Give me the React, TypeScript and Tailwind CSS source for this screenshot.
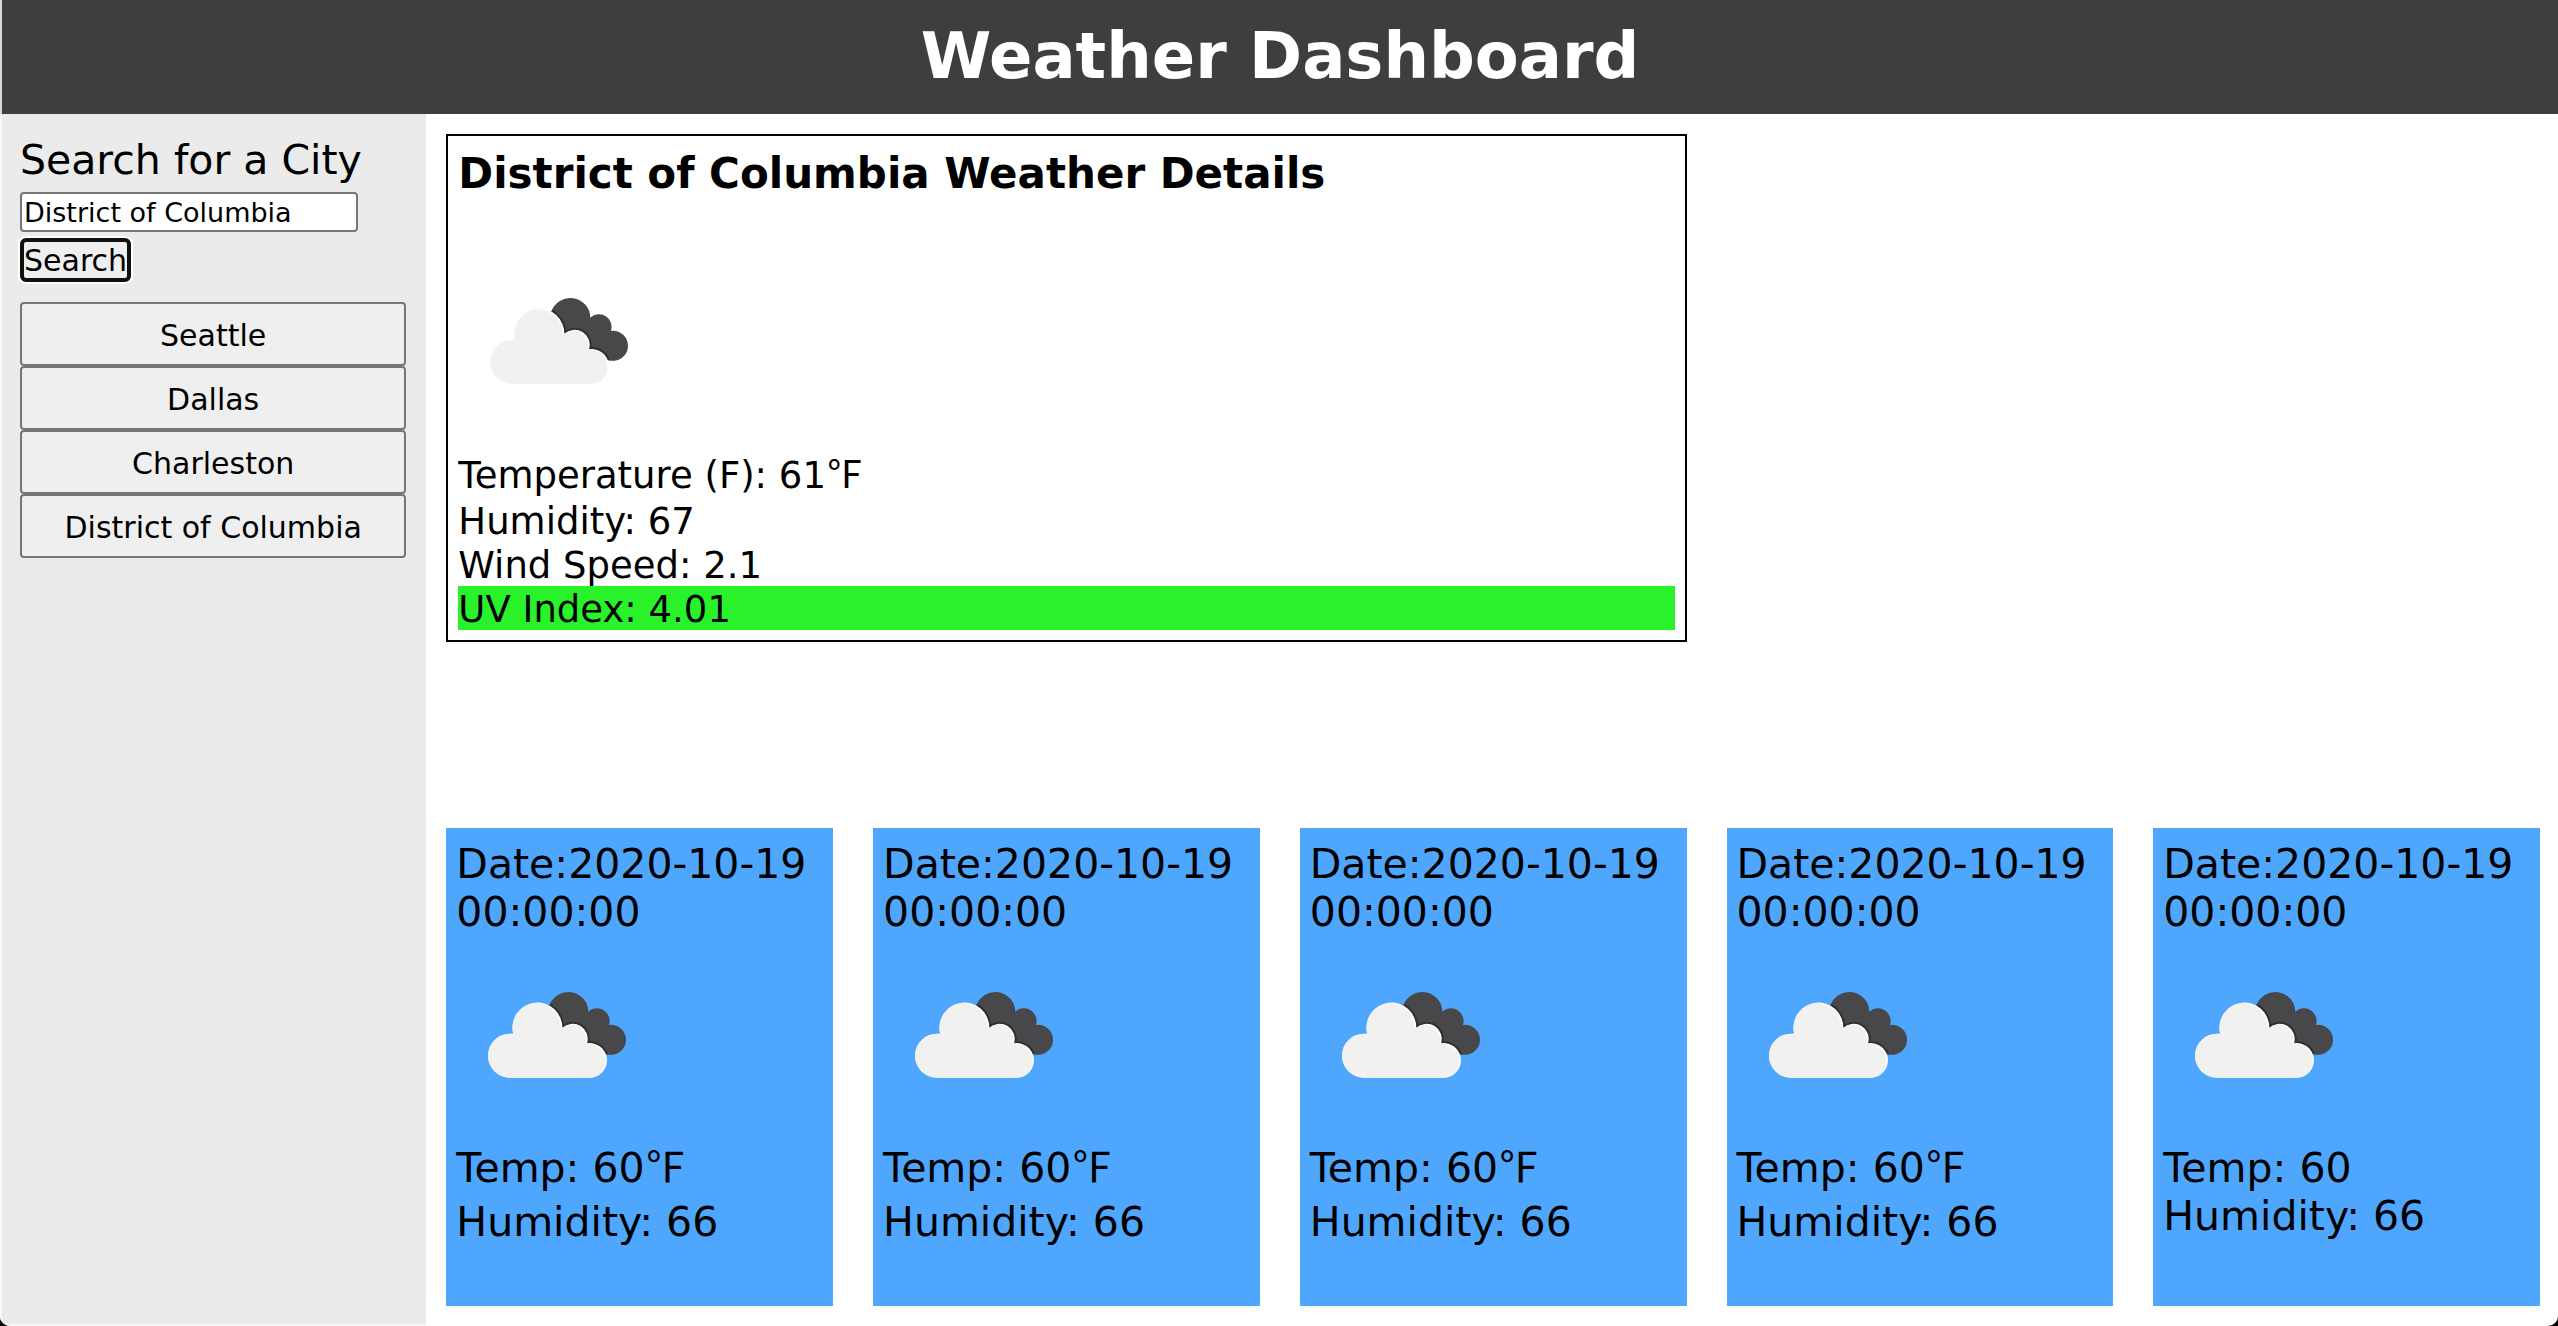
import { useId, useState } from "react";

const cities = ["Seattle", "Dallas", "Charleston", "District of Columbia"];

const forecast = [
  { date: "2020-10-19 00:00:00", temp: "60", unit: "℉", humidity: 66 },
  { date: "2020-10-19 00:00:00", temp: "60", unit: "℉", humidity: 66 },
  { date: "2020-10-19 00:00:00", temp: "60", unit: "℉", humidity: 66 },
  { date: "2020-10-19 00:00:00", temp: "60", unit: "℉", humidity: 66 },
  { date: "2020-10-19 00:00:00", temp: "60", unit: "", humidity: 66 },
];

const FRONT =
  "M54 133.7A22 22 0 0 1 54 89.7L57.3 89.7A24.9 24.9 0 1 1 106.3 84A15 15 0 0 1 131 99.3A17.3 17.3 0 1 1 133.5 133.7Z";
const BACK =
  "M93.3 61.7A20 20 0 0 1 132.3 67.7A12.7 12.7 0 0 1 153 81A15 15 0 1 1 150 110L130 112L95 88Z";

function BrokenClouds() {
  const id = useId();
  return (
    <svg viewBox="0 0 200 200" className="block size-[200px]" role="img" aria-label="Broken clouds">
      <clipPath id={`${id}b`}>
        <path d={BACK} />
      </clipPath>
      <clipPath id={`${id}f`}>
        <path d={FRONT} />
      </clipPath>
      <path d={BACK} fill="#48484a" />
      <path d={FRONT} clipPath={`url(#${id}b)`} fill="none" stroke="#303032" strokeWidth="4" />
      <path d={FRONT} fill="#ffffff" />
      <g clipPath={`url(#${id}f)`}>
        <path d={FRONT} fill="#f1f1f0" stroke="#f1f1f0" strokeWidth="1" transform="translate(-2 1)" />
      </g>
    </svg>
  );
}

export default function App() {
  const [city, setCity] = useState("District of Columbia");
  return (
    <div className="bg-black">
      <div className="flex min-h-screen flex-col overflow-hidden rounded-b-[10px] bg-white font-['DejaVu_Sans',sans-serif] text-black">
        <header className="border-l-2 border-[#d8d8d8] bg-[#3e3e3e] pb-[10px] pt-2 text-center text-white">
          <h1 className="text-[64px] font-bold leading-[96px]">Weather Dashboard</h1>
        </header>

        <div className="grid flex-1 grid-cols-6">
          <aside className="border-b-2 border-l-2 border-[#f8f8f8] bg-[#ebebeb] py-5 pl-[18px] pr-5">
            <form onSubmit={(e) => e.preventDefault()} className="flex flex-col items-start">
              <label htmlFor="city" className="whitespace-nowrap pt-[2px] text-[41px] leading-[48px]">
                Search for a City
              </label>
              <input
                id="city"
                value={city}
                onChange={(e) => setCity(e.target.value)}
                className="mt-2 h-10 w-[338px] max-w-full rounded-[4px] border-2 border-[#767676] bg-white px-[2px] text-[27px] leading-8"
              />
              <button
                type="submit"
                className="mt-[6px] h-11 rounded-[6px] border-4 border-[#101010] bg-[#efefef] pt-[2px] text-[30px] leading-[34px] ring-2 ring-white"
              >
                Search
              </button>
            </form>
            <div className="mt-5 flex flex-col">
              {cities.map((name) => (
                <button
                  key={name}
                  type="button"
                  onClick={() => setCity(name)}
                  className="h-16 rounded-[4px] border-2 border-[#767676] bg-[#efefef] pt-1 text-[30px] leading-9"
                >
                  {name}
                </button>
              ))}
            </div>
          </aside>

          <main className="col-span-5 flex flex-col py-5 pl-5 pr-[18px]">
            <div className="grid grid-cols-5 gap-10">
              <section className="col-span-3 border-2 border-black p-[10px] text-[37px] leading-10">
                <h2 className="pt-1 text-[42px] font-bold leading-[48px]">
                  District of Columbia Weather Details
                </h2>
                <div className="pt-[52px]">
                  <BrokenClouds />
                </div>
                <p className="h-12 pt-1">
                  Temperature (F): 61
                  <span className="font-['Noto_Sans_CJK_JP',sans-serif] leading-none">℉</span>
                </p>
                <p className="pt-1">Humidity: 67</p>
                <p className="pt-1">Wind Speed: 2.1</p>
                <p className="bg-[#29f22b] pt-1">UV Index: 4.01</p>
              </section>
            </div>

            <div className="mt-[186px] grid flex-1 grid-cols-5 gap-10">
              {forecast.map((day, i) => (
                <article key={i} className="bg-[#4fa6fd] px-[10px] py-3 text-[41px] leading-[48px]">
                  <p>{`Date:${day.date}`}</p>
                  <div className="pt-2">
                    <BrokenClouds />
                  </div>
                  <p className={day.unit ? "h-[54px]" : "h-12"}>
                    Temp: {day.temp}
                    {day.unit && (
                      <span className="font-['Noto_Sans_CJK_JP',sans-serif] leading-none">{day.unit}</span>
                    )}
                  </p>
                  <p>Humidity: {day.humidity}</p>
                </article>
              ))}
            </div>
          </main>
        </div>
      </div>
    </div>
  );
}
